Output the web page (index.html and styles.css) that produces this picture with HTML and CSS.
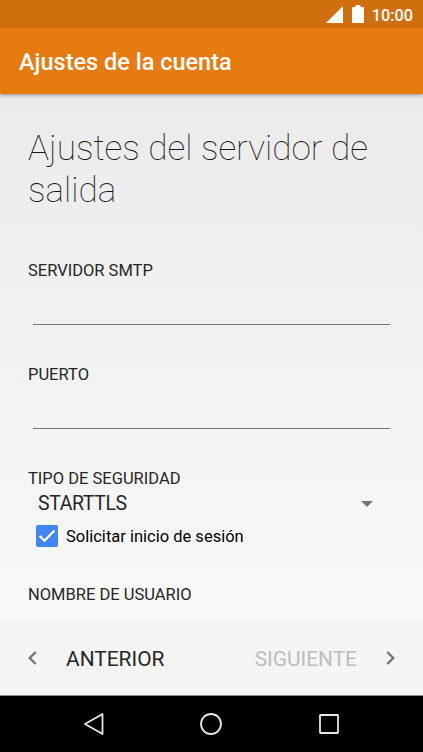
FILE: index.html
```html
<!DOCTYPE html>
<html lang="es">
<head>
<meta charset="UTF-8" />
<meta name="viewport" content="width=device-width, initial-scale=1" />
<title>Ajustes de la cuenta</title>
<link rel="stylesheet" href="styles.css">
</head>
<body>

<div class="status-bar">
  <svg class="signal-icon" width="17" height="17" viewBox="0 0 17 17"><path d="M17 0v17H0z" fill="#fff" /></svg>
  <svg class="battery-icon" width="12" height="18" viewBox="0 0 12 18"><path d="M3.5 0h5v2H11q1 0 1 1v14q0 1-1 1H1q-1 0-1-1V3q0-1 1-1h2.500z" fill="#fff" /></svg>
  <span class="clock">10:00</span>
</div>

<header class="app-bar">
  <h1>Ajustes de la cuenta</h1>
</header>

<form class="settings-form" id="smtpForm" novalidate>
  <h2>Ajustes del servidor de salida</h2>

  <label class="field-label" for="server">SERVIDOR SMTP</label>
  <input class="field-input" type="text" id="server" name="server" />

  <label class="field-label" for="port">PUERTO</label>
  <input class="field-input" type="text" id="port" name="port" />

  <div class="field-label">TIPO DE SEGURIDAD</div>
  <div class="spinner">
    <span class="spinner-value">STARTTLS</span>
    <svg width="12" height="6" viewBox="0 0 12 6"><path d="M0 0h12L6 6z" fill="#757575" /></svg>
  </div>

  <div class="check-row">
    <svg width="22" height="22" viewBox="0 0 22 22">
      <rect width="22" height="22" rx="2" fill="#4285f4" />
      <path d="M3.500 10.800l5 5L18.500 5.500" fill="none" stroke="#fff" stroke-width="2.200" />
    </svg>
    <span class="check-text">Solicitar inicio de sesión</span>
  </div>

  <div class="field-label">NOMBRE DE USUARIO</div>
</form>

<footer class="wizard-bar">
  <button class="wizard-button" type="button">
    <svg width="9" height="14" viewBox="0 0 9 14"><path d="M7.700 1L1.700 7l6 6" fill="none" stroke="#757575" stroke-width="2.400" /></svg>
    <span>ANTERIOR</span>
  </button>
  <button class="wizard-button next" type="button">
    <span>SIGUIENTE</span>
    <svg width="9" height="14" viewBox="0 0 9 14"><path d="M1.300 1l6 6-6 6" fill="none" stroke="#757575" stroke-width="2.400" /></svg>
  </button>
</footer>

<nav class="nav-bar">
  <svg width="24" height="24" viewBox="0 0 24 24"><path d="M20.500 2v20L3 12z" /></svg>
  <svg width="24" height="24" viewBox="0 0 24 24"><circle cx="12" cy="12" r="10" /></svg>
  <svg width="24" height="24" viewBox="0 0 24 24"><rect x="3" y="3" width="18" height="18" rx="0.500" /></svg>
</nav>

</body>
</html>
```

FILE: styles.css
```css
* {
  box-sizing: border-box;
}
body {
  margin: 0;
  height: 752px;
  display: flex;
  flex-direction: column;
  overflow: hidden;
  background: #000;
  font-family: Roboto, sans-serif;
  color: #262626;
}
svg {
  display: block;
  flex: none;
}
.status-bar {
  position: relative;
  z-index: 1;
  height: 28px;
  flex: none;
  display: flex;
  align-items: center;
  justify-content: flex-end;
  padding-right: 10px;
  background-color: #cf6f0e;
  color: #fff;
}
.battery-icon {
  margin-left: 9px;
}
.clock {
  margin-left: 8px;
  margin-top: 3px;
  font-size: 16.3px;
  font-weight: 500;
  line-height: 20px;
}
.app-bar {
  position: relative;
  height: 66px;
  flex: none;
  padding-left: 19px;
  background-color: #e77b0f;
  box-shadow: 0 1px 4px rgba(0,0,0,0.4);
  color: #fff;
}
.app-bar h1 {
  margin: 0;
  padding-top: 1px;
  font-size: 23.5px;
  font-weight: 500;
  line-height: 66px;
}
.settings-form {
  height: 526px;
  flex: none;
  padding: 33px 28px 0;
  background: linear-gradient(#ebebeb, #f9f9f9);
}
.settings-form h2 {
  margin: 0 0 50px;
  font-size: 35.2px;
  font-weight: 100;
  line-height: 42px;
  color: #000;
  opacity: 0.9;
}
.field-label {
  display: block;
  font-size: 16.5px;
  line-height: 20px;
}
.field-input {
  display: block;
  width: 357px;
  height: 44px;
  margin: 0 5px 40px;
  padding: 0;
  border: none;
  border-bottom: 1px solid #757575;
  background: none;
  font-size: 20px;
  outline: none;
}
.spinner {
  display: flex;
  align-items: center;
  justify-content: space-between;
  height: 29px;
  padding: 0 22px 0 10px;
}
.spinner-value {
  font-size: 19.5px;
  letter-spacing: -0.4px;
}
.check-row {
  display: flex;
  align-items: center;
  height: 36px;
  margin-bottom: 31px;
  padding-left: 8px;
  gap: 8px;
  color: #000;
}
.check-text {
  padding-top: 1px;
  font-size: 16.5px;
}
.wizard-bar {
  height: 76px;
  flex: none;
  display: flex;
  justify-content: space-between;
  padding: 0 28px;
  background-color: #f5f5f5;
  border-bottom: 1px solid #8a8a8a;
}
.wizard-button {
  display: flex;
  align-items: center;
  gap: 29px;
  padding: 0;
  border: none;
  background: none;
  color: #262626;
  font-family: inherit;
  font-size: 20.9px;
}
.wizard-button span {
  padding-top: 2px;
}
.wizard-button.next span {
  color: #bdbdbd;
}
.nav-bar {
  height: 56px;
  flex: none;
  display: flex;
  justify-content: center;
  align-items: center;
  gap: 93.5px;
  padding-right: 1px;
  background-color: #000;
}
.nav-bar svg {
  fill: none;
  stroke: #e6e6e6;
  stroke-width: 1.800;
  stroke-linejoin: round;
}
```
